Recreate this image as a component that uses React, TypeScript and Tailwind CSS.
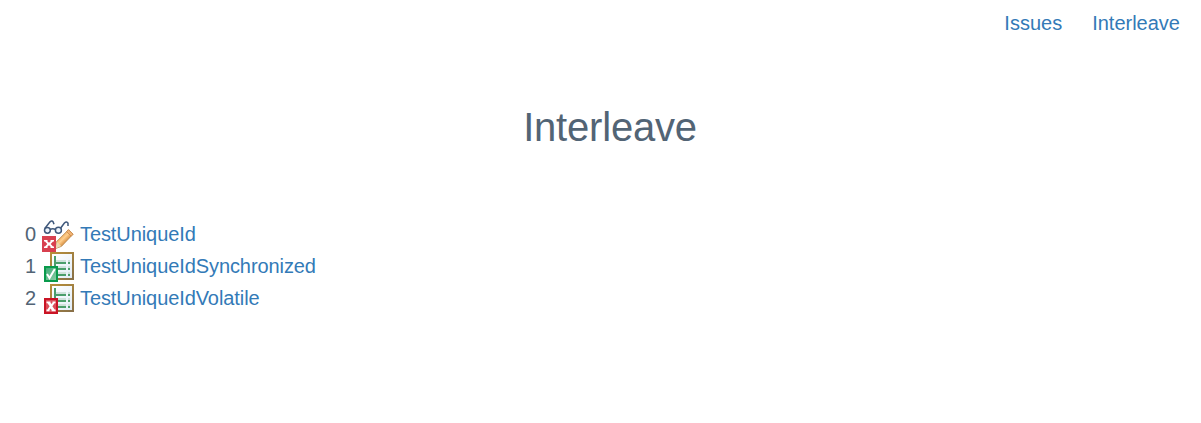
type Status = 'rw-fail' | 'pass' | 'fail';

const tests: { name: string; status: Status }[] = [
  { name: 'TestUniqueId', status: 'rw-fail' },
  { name: 'TestUniqueIdSynchronized', status: 'pass' },
  { name: 'TestUniqueIdVolatile', status: 'fail' },
];

function GlassesPencilIcon() {
  return (
    <svg className="block size-8" viewBox="0 0 32 32" fill="none">
      <defs>
        <linearGradient id="wood" x1="18" y1="16" x2="24" y2="22" gradientUnits="userSpaceOnUse">
          <stop offset="0" stopColor="#eba454" />
          <stop offset="0.5" stopColor="#ffcf8c" />
          <stop offset="1" stopColor="#d99043" />
        </linearGradient>
      </defs>
      <g stroke="#3f587b" strokeWidth="1.5">
        <circle cx="5.4" cy="10.3" r="2.9" fill="#edf4fb" />
        <circle cx="16.4" cy="10.3" r="3" fill="#edf4fb" />
        <path d="M8 9.5 Q10.8 8.2 13.5 9.5M2.8 8.5 L8 1.8 Q10 .2 11.2 2 L12 4.3M18.7 8 L22.4 3 Q24.7 .9 26 3.2 V6" />
      </g>
      <path d="M13.7 28.5 L14.7 21.5 L26.5 9.7 L31 14.2 L19.5 26.3 Z" fill="url(#wood)" stroke="#b98a50" strokeWidth=".9" />
      <path d="M26.5 9.7 L31 14.2 L29.2 16.2 L24.6 11.6 Z" fill="#f1b475" stroke="#c98746" strokeWidth=".8" />
      <path d="M13.7 28.5 L14.7 21.8 L19.2 26.1 Z" fill="#ead7b2" />
      <path d="M0 16h14v16H0z" fill="#d8404f" />
      <path d="M2 20h3.5v1.4L7 22.8l1.5-1.4V20H12v1.6h-1L8.7 24l2.3 2.4h1V28H8.5v-1.4L7 25.2l-1.5 1.4V28H2v-1.6h1L5.3 24 3 21.6H2z" fill="#fff" />
    </svg>
  );
}

function SheetIcon({ passed }: { passed: boolean }) {
  return (
    <svg className="block size-8" viewBox="0 0 32 32" fill="none">
      <defs>
        <linearGradient id="frame" x1="8" y1="0" x2="32" y2="28" gradientUnits="userSpaceOnUse">
          <stop offset="0" stopColor="#b99039" />
          <stop offset="1" stopColor="#876f49" />
        </linearGradient>
        <linearGradient id="paper" x1="10" y1="2" x2="30" y2="26" gradientUnits="userSpaceOnUse">
          <stop offset="0" stopColor="#fff" />
          <stop offset="1" stopColor="#e1edf8" />
        </linearGradient>
        <linearGradient id="check" x1="4" y1="16" x2="14" y2="28" gradientUnits="userSpaceOnUse">
          <stop offset="0" stopColor="#3fa976" />
          <stop offset="1" stopColor="#8acca4" />
        </linearGradient>
      </defs>
      <path d="M9 1h22v26H9z" fill="url(#paper)" stroke="url(#frame)" strokeWidth="2" />
      <path d="M14 8h10v2H14zM26 8h2v2h-2zM14 14h10v2H14zM26 14h2v2h-2zM14 20h10v2H14zM26 20h2v2h-2z" fill="#cfe2dc" />
      <path d="M12 4h2v20h-2zM14 10h10v2H14zM26 10h2v2h-2zM14 16h10v2H14zM26 16h2v2h-2zM14 22h10v2H14zM26 22h2v2h-2z" fill="#4b9e6c" />
      {passed ? (
        <>
          <path d="M3 15h12v14H3z" fill="url(#check)" stroke="#099a4b" strokeWidth="2" />
          <path d="M5 22 L7.5 26 L12.8 17" stroke="#fff" strokeWidth="2" />
        </>
      ) : (
        <>
          <path d="M3 15h12v14H3z" fill="#db4f5b" stroke="#ca1425" strokeWidth="2" />
          <path d="M4.5 17.5h4v1.2L9.4 20l1.1-1.3v-1.2h3v1.7h-1l-2.1 3 2.2 3.2h1v1.9h-4v-1.2L8.7 24.6l-1.2 1.5v1.2h-3v-1.9h1l2.1-3.2-2.1-3h-1z" fill="#fff" />
        </>
      )}
    </svg>
  );
}

export default function App() {
  return (
    <div className="min-h-[423px] bg-white font-['Liberation_Sans',Arial,sans-serif] text-xl text-[#526475]">
      <nav className="flex h-[46px] items-center justify-end gap-[30px] pr-[21px] text-[#337ab7]">
        <a href="#issues">Issues</a>
        <a href="#interleave">Interleave</a>
      </nav>
      <h1 className="mt-[59px] pl-[19px] text-center text-[40px] leading-[44px] tracking-[-0.2px]">Interleave</h1>
      <main className="mt-[71px] pl-[25px]">
        {tests.map((test, index) => (
          <div className="flex h-8 items-start" key={test.name}>
            <span className="w-[17px] leading-7">{index}</span>
            {test.status === 'rw-fail' ? <GlassesPencilIcon /> : <SheetIcon passed={test.status === 'pass'} />}
            <a className="ml-1.5 leading-7 tracking-[-0.085px] text-[#337ab7]" href={`#${test.name}`}>{test.name}</a>
          </div>
        ))}
      </main>
    </div>
  );
}
